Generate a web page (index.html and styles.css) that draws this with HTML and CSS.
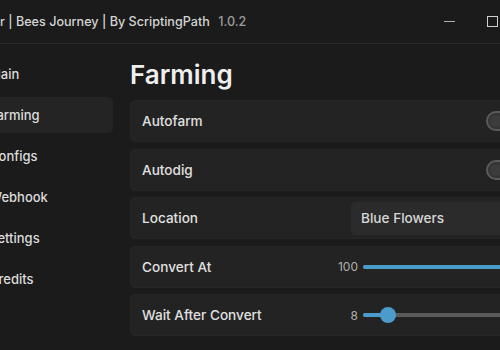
FILE: index.html
```html
<!DOCTYPE html>
<html>
<head>
    <title>Bees Journey</title>
    <link rel="stylesheet" href="styles.css">
</head>
<body>
    <div class="window">
        <div class="titlebar">
            <div class="title">r | Bees Journey | By ScriptingPath <span class="version">1.0.2</span></div>
            <div class="controls">
                <span class="btn-min"></span>
                <span class="btn-max"></span>
            </div>
        </div>
        <div class="main">
            <div class="sidebar">
                <div class="tab">Main</div>
                <div class="tab active">Farming</div>
                <div class="tab">Configs</div>
                <div class="tab">Webhook</div>
                <div class="tab">Settings</div>
                <div class="tab">Credits</div>
            </div>
            <div class="content">
                <h1>Farming</h1>

                <div class="row">
                    <span class="label">Autofarm</span>
                    <div class="toggle"><span class="knob"></span></div>
                </div>
                <div class="row">
                    <span class="label">Autodig</span>
                    <div class="toggle"><span class="knob"></span></div>
                </div>
                <div class="row">
                    <span class="label">Location</span>
                    <div class="dropdown">Blue Flowers</div>
                </div>
                <div class="row">
                    <span class="label">Convert At</span>
                    <div class="slider">
                        <span class="value">100</span>
                        <div class="track"><div class="fill" style="width: 100%"></div></div>
                    </div>
                </div>
                <div class="row">
                    <span class="label">Wait After Convert</span>
                    <div class="slider">
                        <span class="value">8</span>
                        <div class="track"><div class="fill" style="width: 25px"><span class="thumb"></span></div></div>
                    </div>
                </div>
            </div>
        </div>
    </div>
</body>
</html>
```

FILE: styles.css
```css
body { margin: 0; background: #1b1b1b; font-family: Inter, "Noto Sans", sans-serif; color: #e2e2e2; overflow: hidden; }
.window { width: 560px; margin-left: -12px; height: 350px; background: #1b1b1b; }

.titlebar { height: 43px; border-bottom: 1px solid #2c2c2c; display: flex; align-items: center; justify-content: space-between; padding-left: 12px; }
.title { font-size: 12.6px; font-weight: 500; color: #d4d4d4; }
.version { color: #9c9c9c; margin-left: 5px; }
.controls { display: flex; align-items: center; width: 104px; }
.btn-min { width: 11px; height: 1px; background: #b0b0b0; }
.btn-max { width: 9px; height: 9px; border: 1px solid #cfcfcf; margin-left: 32px; }

.main { display: flex; }
.sidebar { width: 132px; padding: 12px 7px 0 0; box-sizing: border-box; display: flex; flex-direction: column; gap: 5px; }
.tab { height: 36px; line-height: 36px; padding-left: 1px; font-size: 13px; font-weight: 500; color: #dcdcdc; border-radius: 5px; }
.tab.active { background: #242424; }

.content { padding: 0 0 0 10px; width: 410px; }
h1 { margin: 12px 0 -12px; height: 50px; line-height: 38px; font-size: 26px; font-weight: 600; color: #efefef; }
.row { height: 42px; margin-top: 6.5px; background: #232323; border-radius: 5px; border: 1px solid #262626; box-sizing: border-box; display: flex; align-items: center; padding: 0 12px 0 11px; }
.row:first-of-type { margin-top: 6px; }
.label { flex: 1; font-size: 13.6px; font-weight: 500; color: #e0e0e0; }

.toggle { width: 44px; height: 20px; border: 2px solid #5a5a5a; border-radius: 12px; background: #343434; box-sizing: border-box; position: relative; margin-right: -3px; }
.knob { position: absolute; left: 2px; top: 2px; width: 12px; height: 12px; border-radius: 50%; background: #3c3c3c; }

.dropdown { width: 188px; height: 33px; margin-right: -12px; background: #2b2b2b; border-radius: 5px; font-size: 13.6px; font-weight: 500; color: #d8d8d8; line-height: 33px; padding-left: 10px; box-sizing: border-box; }

.slider { display: flex; align-items: center; width: 193px; }
.value { width: 24px; text-align: right; font-size: 12px; color: #b0b0b0; margin-right: 5px; }
.track { flex: 1; height: 4px; background: #5a5a5a; border-radius: 2px; }
.fill { height: 4px; background: #4b9bcb; border-radius: 2px; position: relative; }
.thumb { position: absolute; right: -8px; top: -6px; width: 16px; height: 16px; border-radius: 50%; background: #4b9bcb; }
```
